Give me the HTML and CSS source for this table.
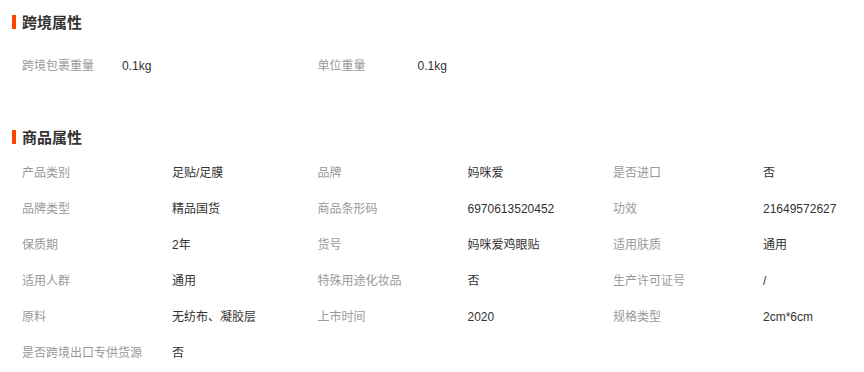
FILE: index.html
```html
<!DOCTYPE html>
<html lang="zh-CN">
<head>
<meta charset="utf-8">
<title>属性</title>
<link rel="stylesheet" href="styles.css">
</head>
<body>
<section class="attr attr-cross">
  <h2 class="attr-title">跨境属性</h2>
  <ul class="attr-list">
    <li class="attr-item"><span class="attr-label">跨境包裹重量</span><span class="attr-value">0.1kg</span></li>
    <li class="attr-item"><span class="attr-label">单位重量</span><span class="attr-value">0.1kg</span></li>
  </ul>
</section>
<section class="attr attr-goods">
  <h2 class="attr-title">商品属性</h2>
  <ul class="attr-list">
    <li class="attr-item"><span class="attr-label">产品类别</span><span class="attr-value">足贴/足膜</span></li>
    <li class="attr-item"><span class="attr-label">品牌</span><span class="attr-value">妈咪爱</span></li>
    <li class="attr-item"><span class="attr-label">是否进口</span><span class="attr-value">否</span></li>
    <li class="attr-item"><span class="attr-label">品牌类型</span><span class="attr-value">精品国货</span></li>
    <li class="attr-item"><span class="attr-label">商品条形码</span><span class="attr-value">6970613520452</span></li>
    <li class="attr-item"><span class="attr-label">功效</span><span class="attr-value">21649572627</span></li>
    <li class="attr-item"><span class="attr-label">保质期</span><span class="attr-value">2年</span></li>
    <li class="attr-item"><span class="attr-label">货号</span><span class="attr-value">妈咪爱鸡眼贴</span></li>
    <li class="attr-item"><span class="attr-label">适用肤质</span><span class="attr-value">通用</span></li>
    <li class="attr-item"><span class="attr-label">适用人群</span><span class="attr-value">通用</span></li>
    <li class="attr-item"><span class="attr-label">特殊用途化妆品</span><span class="attr-value">否</span></li>
    <li class="attr-item"><span class="attr-label">生产许可证号</span><span class="attr-value">/</span></li>
    <li class="attr-item"><span class="attr-label">原料</span><span class="attr-value">无纺布、凝胶层</span></li>
    <li class="attr-item"><span class="attr-label">上市时间</span><span class="attr-value">2020</span></li>
    <li class="attr-item"><span class="attr-label">规格类型</span><span class="attr-value">2cm*6cm</span></li>
    <li class="attr-item"><span class="attr-label">是否跨境出口专供货源</span><span class="attr-value">否</span></li>
  </ul>
</section>
</body>
</html>
```
FILE: styles.css
```css
html, body {
  margin: 0;
  padding: 0;
  background: #fff;
}
body {
  font-family: "Liberation Sans", "Noto Sans CJK SC", sans-serif;
  font-size: 12px;
  color: #333;
  overflow: hidden;
}
.attr-title {
  margin: 0;
  position: relative;
  padding-left: 22px;
  font-size: 15px;
  line-height: 20px;
  font-weight: bold;
  color: #333;
  font-family: "Noto Sans CJK SC", sans-serif;
}
.attr-title::before {
  content: "";
  position: absolute;
  left: 12px;
  top: 3px;
  width: 4px;
  height: 14px;
  background: #ff4400;
}
.attr-list {
  list-style: none;
  margin: 0;
  padding: 0 0 0 22px;
  display: grid;
  grid-template-columns: 295.5px 295.5px minmax(0, 1fr);
}
.attr-item {
  display: flex;
  height: 36px;
  line-height: 36px;
  white-space: nowrap;
  min-width: 0;
}
.attr-label {
  color: #999;
  flex: none;
}
.attr-value {
  color: #333;
}
.attr-cross {
  padding-top: 12px;
}
.attr-cross .attr-list {
  margin-top: 16px;
}
.attr-cross .attr-label {
  width: 100px;
}
.attr-goods {
  margin-top: 43px;
}
.attr-goods .attr-list {
  margin-top: 8px;
}
.attr-goods .attr-label {
  width: 150px;
}
```
